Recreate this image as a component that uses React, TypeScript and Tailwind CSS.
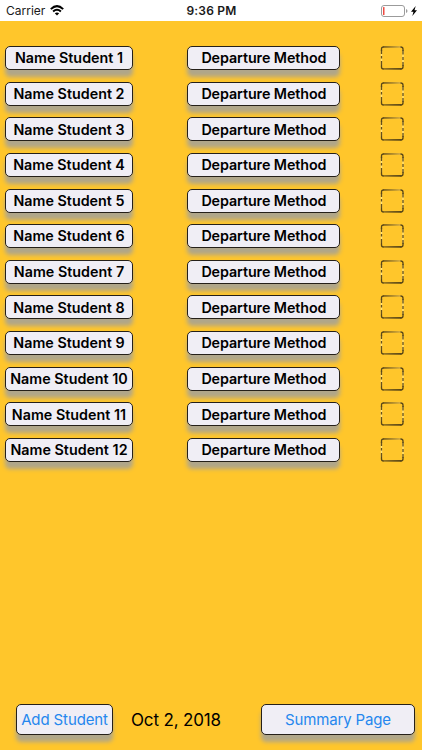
import clsx from "clsx";
import type { ReactNode } from "react";

const students = Array.from({ length: 12 }, (_, i) => `Name Student ${i + 1}`);

export default function App() {
  return (
    <div className="flex h-[750px] w-[422px] flex-col overflow-hidden bg-[#ffc62b] font-['Inter',sans-serif] text-black">
      <StatusBar />
      <main className="flex flex-col gap-[11.65px] pt-[25px] pl-[5px]">
        {students.map((name) => (
          <StudentRow key={name} name={name} />
        ))}
      </main>
      <Footer />
    </div>
  );
}

function StatusBar() {
  return (
    <header className="grid h-[21px] shrink-0 grid-cols-[1fr_auto_1fr] items-center bg-white pr-[5px] pl-[6px] text-[12px] text-[#1a1a1a]">
      <div className="flex items-center gap-[5px]">
        <span>Carrier</span>
        <WifiIcon />
      </div>
      <span className="font-semibold tracking-[0.2px]">9:36 PM</span>
      <div className="flex items-center justify-end gap-[3px]">
        <BatteryIcon />
        <BoltIcon />
      </div>
    </header>
  );
}

function StudentRow({ name }: { name: string }) {
  return (
    <div className="flex h-6 items-center">
      <Button className="h-6 w-32 text-[14.3px] font-semibold tracking-[0.02px]">{name}</Button>
      <Button className="ml-[54.4px] h-6 w-[153px] text-[14.3px] font-semibold tracking-[-0.08px]">
        Departure Method
      </Button>
      <div className="ml-10">
        <CheckBox />
      </div>
    </div>
  );
}

function Button({ className, children }: { className?: string; children: ReactNode }) {
  return (
    <button
      className={clsx(
        "flex shrink-0 items-center justify-center rounded-[5px] border border-[#252019] bg-[#f0eef5] whitespace-nowrap shadow-[0_7px_4px_#b0a68a]",
        className,
      )}
    >
      {children}
    </button>
  );
}

function Footer() {
  return (
    <footer className="mt-auto mb-[15px] flex h-[31px] items-center pl-4">
      <Button className="h-[31px] w-[97px] pt-px text-[15px] tracking-[-0.12px] text-[#2587ee]">Add Student</Button>
      <span className="ml-[18px] w-[130px] pt-0.5 text-[17px] tracking-[-0.15px] whitespace-nowrap">Oct 2, 2018</span>
      <Button className="h-[31px] w-[154px] pt-px text-[15px] tracking-[-0.15px] text-[#2587ee]">Summary Page</Button>
    </footer>
  );
}

function CheckBox() {
  return (
    <svg className="block" width="24" height="24" viewBox="0 0 24 24" fill="none">
      <defs>
        <linearGradient id="edge-top" x1="0" x2="1" y1="0" y2="0">
          <stop offset="0" stopColor="#4b3b16" />
          <stop offset="0.5" stopColor="#8b702a" />
          <stop offset="1" stopColor="#d1ab4b" />
        </linearGradient>
        <linearGradient id="edge-bottom" x1="0" x2="1" y1="0" y2="0">
          <stop offset="0" stopColor="#80651f" />
          <stop offset="0.6" stopColor="#4b3b14" />
          <stop offset="1" stopColor="#302812" />
        </linearGradient>
      </defs>
      <path d="M1.5 4V20M23 4V20" stroke="#ffe27b" strokeWidth="1.4" />
      <path d="M1.5 4V8M1.5 10V12.5M1.5 15V19M23 4V8.5M23 11V14M23 16V20" stroke="#65501c" strokeWidth="1.3" />
      <path d="M3 .3H21.5V1.6H3Z" fill="url(#edge-top)" />
      <path d="M3 22.2H21.5V23.6H3Z" fill="url(#edge-bottom)" />
      <path
        d="M1.5 5V3Q1.5 1 3.5 1M20.5 1Q23 1 23 3V5M1.5 19V21Q1.5 23 3.5 23M20.5 23Q23 23 23 21V19"
        stroke="#594717"
        strokeWidth="1.3"
      />
    </svg>
  );
}

function WifiIcon() {
  return (
    <svg width="14" height="11" viewBox="0 0 14 11" fill="none" stroke="#000" strokeWidth="2">
      <path d="M.8 4.1Q7-1.8 13.2 4.1M3.1 6.6Q7 3 10.9 6.6" />
      <path d="M7 10.5L4.8 8.3Q7 6.5 9.2 8.3Z" fill="#000" stroke="none" />
    </svg>
  );
}

function BatteryIcon() {
  return (
    <svg width="27" height="12" viewBox="0 0 27 12" fill="none">
      <rect x=".5" y=".5" width="23" height="11" rx="2.5" stroke="#9b9b9b" />
      <rect x="2" y="2" width="1.5" height="8" rx=".5" fill="#ef4a42" />
      <path d="M25 4Q26.5 4.5 26.5 6T25 8Z" fill="#9b9b9b" />
    </svg>
  );
}

function BoltIcon() {
  return (
    <svg width="6" height="10" viewBox="0 0 6 10">
      <path d="M4.7 0L0 5.8H2.5L1.3 10L6 4.2H3.5Z" fill="#000" />
    </svg>
  );
}
